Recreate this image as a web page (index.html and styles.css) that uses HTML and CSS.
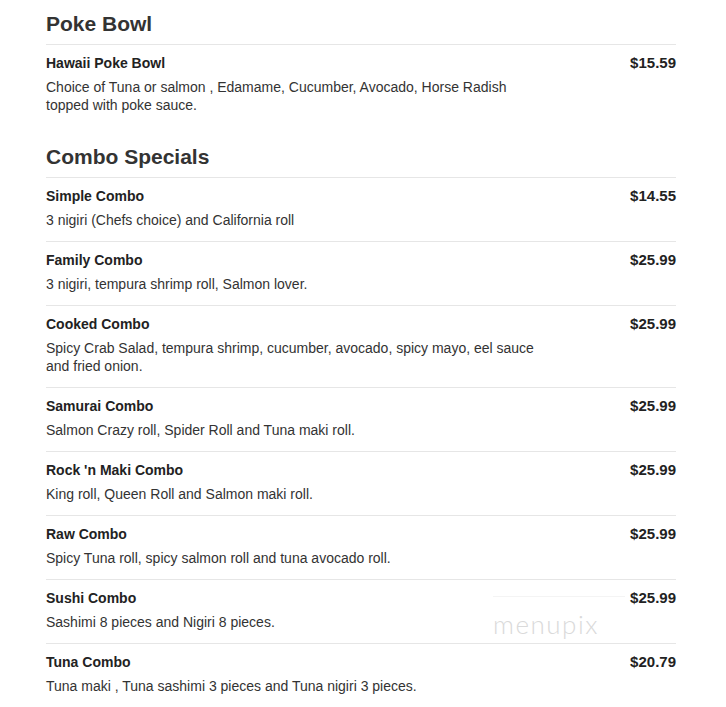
FILE: index.html
```html
<!DOCTYPE html>
<html>
<head>
<meta charset="utf-8">
<link rel="stylesheet" href="styles.css">
</head>
<body>
<div class="menu">
  <section class="section">
    <h2 class="section-title">Poke Bowl</h2>
    <div class="item">
      <div class="item-main">
        <div class="item-name">Hawaii Poke Bowl</div>
        <div class="item-desc">Choice of Tuna or salmon , Edamame, Cucumber, Avocado, Horse Radish topped with poke sauce.</div>
      </div>
      <div class="item-price">$15.59</div>
    </div>
  </section>
  <section class="section">
    <h2 class="section-title">Combo Specials</h2>
    <div class="item">
      <div class="item-main">
        <div class="item-name">Simple Combo</div>
        <div class="item-desc">3 nigiri (Chefs choice) and California roll</div>
      </div>
      <div class="item-price">$14.55</div>
    </div>
    <div class="item">
      <div class="item-main">
        <div class="item-name">Family Combo</div>
        <div class="item-desc">3 nigiri, tempura shrimp roll, Salmon lover.</div>
      </div>
      <div class="item-price">$25.99</div>
    </div>
    <div class="item">
      <div class="item-main">
        <div class="item-name">Cooked Combo</div>
        <div class="item-desc">Spicy Crab Salad, tempura shrimp, cucumber, avocado, spicy mayo, eel sauce and fried onion.</div>
      </div>
      <div class="item-price">$25.99</div>
    </div>
    <div class="item">
      <div class="item-main">
        <div class="item-name">Samurai Combo</div>
        <div class="item-desc">Salmon Crazy roll, Spider Roll and Tuna maki roll.</div>
      </div>
      <div class="item-price">$25.99</div>
    </div>
    <div class="item">
      <div class="item-main">
        <div class="item-name">Rock 'n Maki Combo</div>
        <div class="item-desc">King roll, Queen Roll and Salmon maki roll.</div>
      </div>
      <div class="item-price">$25.99</div>
    </div>
    <div class="item">
      <div class="item-main">
        <div class="item-name">Raw Combo</div>
        <div class="item-desc">Spicy Tuna roll, spicy salmon roll and tuna avocado roll.</div>
      </div>
      <div class="item-price">$25.99</div>
    </div>
    <div class="item">
      <div class="item-main">
        <div class="item-name">Sushi Combo</div>
        <div class="item-desc">Sashimi 8 pieces and Nigiri 8 pieces.</div>
      </div>
      <div class="item-price">$25.99</div>
    </div>
    <div class="item">
      <div class="item-main">
        <div class="item-name">Tuna Combo</div>
        <div class="item-desc">Tuna maki , Tuna sashimi 3 pieces and Tuna nigiri 3 pieces.</div>
      </div>
      <div class="item-price">$20.79</div>
    </div>
  </section>
</div>
<div class="watermark"><span class="watermark-line"></span><span class="watermark-text">menupix</span></div>
</body>
</html>
```

FILE: styles.css
```css
html, body {
  margin: 0;
  padding: 0;
  background: #ffffff;
}

body {
  font-family: "Liberation Sans", Arial, sans-serif;
  color: #333333;
}

.menu {
  width: 630px;
  padding: 12px 0 0 46px;
}

.section + .section {
  margin-top: 19px;
}

.section-title {
  margin: 0;
  font-size: 21px;
  line-height: 24px;
  font-weight: bold;
  color: #333333;
  padding-bottom: 8px;
  border-bottom: 1px solid #e6e6e6;
}

.item {
  display: flex;
  justify-content: space-between;
  align-items: flex-start;
  padding: 8px 0 12px 0;
}

.item + .item {
  border-top: 1px solid #e6e6e6;
}

.item-main {
  width: 500px;
}

.item-name {
  font-size: 14px;
  line-height: 20px;
  font-weight: bold;
  color: #222222;
}

.item-desc {
  margin-top: 5px;
  font-size: 14px;
  line-height: 18px;
  color: #333333;
}

.item-price {
  font-size: 15px;
  line-height: 20px;
  font-weight: bold;
  color: #222222;
}

.watermark {
  position: absolute;
  left: 493px;
  top: 596px;
  display: flex;
  flex-direction: column;
  align-items: flex-start;
}

.watermark-line {
  display: block;
  width: 132px;
  height: 1px;
  background: #f4f4f4;
}

.watermark-text {
  margin-top: 14px;
  font-family: "Lato", "DejaVu Sans", sans-serif;
  font-weight: 300;
  font-size: 26px;
  line-height: 26px;
  letter-spacing: 1.5px;
  color: #dadada;
}
```
